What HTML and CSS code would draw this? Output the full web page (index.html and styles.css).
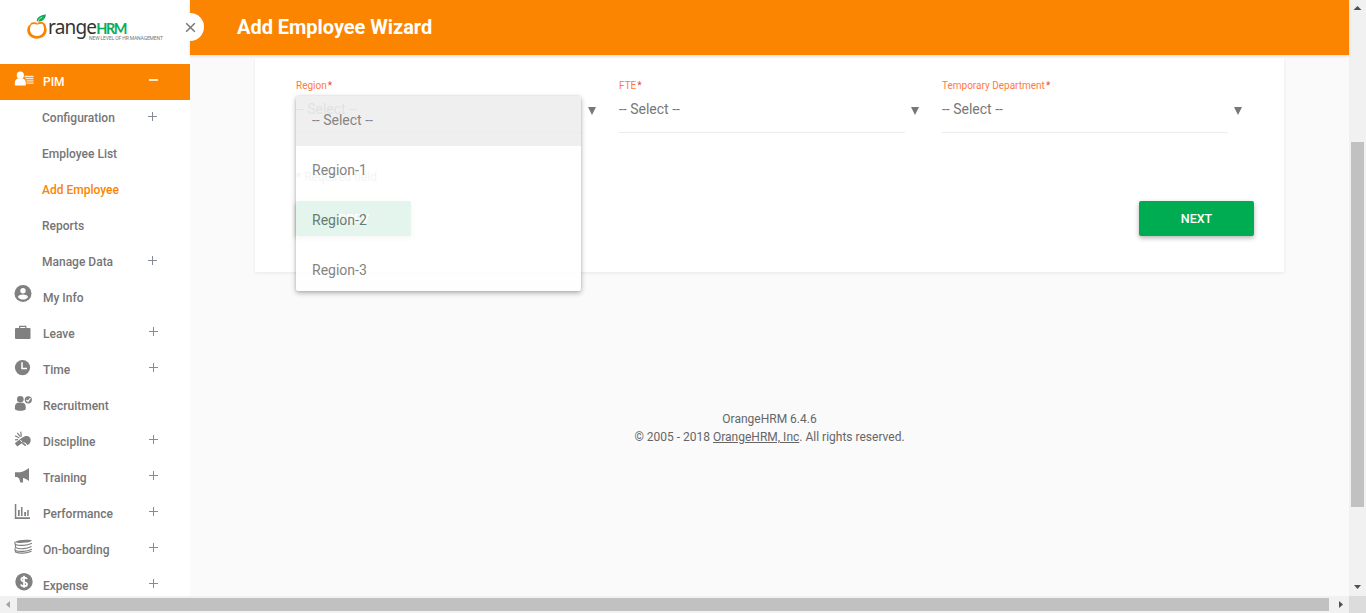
FILE: index.html
```html
<!DOCTYPE html>
<html lang="en">
<head>
<meta charset="utf-8">
<title>Add Employee Wizard</title>
<link rel="stylesheet" href="styles.css">
</head>
<body>
<div class="app">
  <div class="content">
    <aside class="sidebar">
      <div class="brand">
        <svg class="fruit" width="22" height="28" viewBox="0 0 22 28">
          <path d="M5 10.200C2 11.600.2 14 .2 17c0 5 4.300 8.700 9.700 8.700s9.800-3.700 9.800-8.700c0-3.400-1.800-6.200-4.700-7.300 1.400 2 2 4.100 2 6.300 0 4.100-2.900 6.900-6.900 6.900S3 20.100 3 16.400c0-2.400.8-4.500 2.600-6.200z" fill="#f98602"/>
          <path d="M4 10.900c3.200-2.200 5.300.3 6.800-.3 1.600-.6 3.200-1.300 4.700-.6 1.800 1 2.700 3 2.700 5" fill="none" stroke="#f98602" stroke-width="1.800"/>
          <path d="M9.800 8.500C9.500 4.500 13 2.100 19 1.500c-.6 4.500-3.400 7.500-9.200 7z" fill="#0aac57"/>
          <path d="M10.400 10.500C10.500 7.500 12.500 5.500 15.300 4.200" stroke="#fff" stroke-width=".7" fill="none"/>
        </svg>
        <div class="wordmark"><span class="name">range<b>HRM</b></span><span class="tagline">NEW LEVEL OF HR MANAGEMENT</span></div>
      </div>
      <nav class="menu">
        <a class="row active"><span class="icon"><svg width="20" height="20" viewBox="0 0 20 20" fill="#fff"><circle cx="6.300" cy="6.200" r="3.600"/><path d="M1 16.500c-1-4.500 1-7.500 5.300-7.500s6.500 3 5.300 7.500z"/><path d="M10.500 6.700h9v1.500h-9zM11.500 9h8v1.300h-8zM12.500 11.200h7v1.300h-7zM12.500 13.400h7v1.300h-7z" opacity=".8"/></svg></span><span class="text">PIM</span><i class="toggle minus"></i></a>
        <a class="row sub"><span class="text">Configuration</span><i class="toggle plus"></i></a>
        <a class="row sub"><span class="text">Employee List</span></a>
        <a class="row sub current"><span class="text">Add Employee</span></a>
        <a class="row sub"><span class="text">Reports</span></a>
        <a class="row sub"><span class="text">Manage Data</span><i class="toggle plus"></i></a>
        <a class="row"><span class="icon"><svg width="20" height="20" viewBox="0 0 20 20"><circle cx="9" cy="8.500" r="8.500"/><circle cx="9" cy="5.700" r="2.700" fill="#fff"/><path d="M3.900 11.900c1.500-3.100 8.700-3.100 10.200 0-2.600 3.600-7.600 3.600-10.200 0z" fill="#fff"/></svg></span><span class="text">My Info</span></a>
        <a class="row"><span class="icon low"><svg width="20" height="20" viewBox="0 0 20 20"><rect x="1" y="5" width="15.500" height="11" rx="1"/><path d="M5.600 5V3.300h6.200V5" fill="none" stroke="#808080" stroke-width="1.200"/></svg></span><span class="text">Leave</span><i class="toggle plus"></i></a>
        <a class="row"><span class="icon low"><svg width="20" height="20" viewBox="0 0 20 20"><circle cx="8.500" cy="8.600" r="7.600"/><path d="M8 3.300v6.200h5" fill="none" stroke="#fff" stroke-width="1.500"/></svg></span><span class="text">Time</span><i class="toggle plus"></i></a>
        <a class="row"><span class="icon low"><svg width="20" height="20" viewBox="0 0 20 20"><circle cx="6.300" cy="4.300" r="3.300"/><path d="M1 14.500c-.5-4.200.7-6.700 3.600-6.700h3.500c2.900 0 4.100 2.500 3.600 6.700-2.300 1.800-8.400 1.800-10.700 0z"/><circle cx="14.300" cy="4.800" r="3.600"/><path d="m12.400 4.900 1.500 1.600L16.400 3" fill="none" stroke="#fff" stroke-width="1.200"/></svg></span><span class="text">Recruitment</span></a>
        <a class="row"><span class="icon low"><svg width="20" height="20" viewBox="0 0 20 20"><path d="M.8 12.300 7.600 7l3.200-1.800c2-.6 4.200-.1 5.200 1.600 1.500 2.500.5 6.500-2.700 7.200-.9-1.700-2.200-2.600-4-2.800L3.200 15.500z"/><path d="m8.500 12 3.300 2.600" stroke="#808080" stroke-width="1.600"/><path d="M1 4.800 5.200 7M3.300 1.900l3.200 3.900M6.700.7l.7 4.800M1 8.900l3-.3" fill="none" stroke="#808080" stroke-width="1.200"/><path d="m6.300 9 1.800 2" stroke="#fff"/></svg></span><span class="text">Discipline</span><i class="toggle plus"></i></a>
        <a class="row"><span class="icon low"><svg width="20" height="20" viewBox="0 0 20 20"><path d="M1 5.300h5C9 4.500 12 3.500 15 1v13c-2.300-1.900-4.400-2.700-6-3v4.500H6.300L5 11H3.700v-1H1z"/></svg></span><span class="text">Training</span><i class="toggle plus"></i></a>
        <a class="row"><span class="icon low"><svg width="20" height="20" viewBox="0 0 20 20"><path d="M.8 1h1.500v13.300H16V16H.8zM4 7h1.700v6H4zM7 4h1.500v9H7zM10.200 9H12v4h-1.800zM13.200 7h1.500v6h-1.500z"/></svg></span><span class="text">Performance</span><i class="toggle plus"></i></a>
        <a class="row"><span class="icon low"><svg width="20" height="20" viewBox="0 0 20 20"><path d="M1 3C4 .7 12 .2 18 1.200c-2 1.900-3.500 2.300-6 2.400C7.500 4.100 3 4.300 1 3z"/><g fill="none" stroke="#808080" stroke-width="1.200"><path d="M1 2.700v2.500c4.500 2.200 12 1.200 17-1M1.500 6v2.500c4.500 2.200 11.500 1.200 16-1M1 9.200v2c4.500 2.200 12 1.200 17-1M1.500 12v1c4.500 2 11.500 1.200 16-.8"/></g></svg></span><span class="text">On-boarding</span><i class="toggle plus"></i></a>
        <a class="row"><span class="icon"><svg width="20" height="20" viewBox="0 0 20 20"><circle cx="10" cy="8.700" r="8.700"/><path d="M13 6c-.7-2-5.700-2-5.700.5s5.700 2 5.700 4.700-5.500 2.600-6.200.4M10 2.700v12" fill="none" stroke="#fff" stroke-width="1.800"/></svg></span><span class="text">Expense</span><i class="toggle plus"></i></a>
      </nav>
    </aside>
    <main class="main">
      <header class="topbar"><h1>Add Employee Wizard</h1><button class="collapse" aria-label="Close menu"><svg width="11" height="11" viewBox="0 0 11 11"><path d="m1.200 1.200 8.600 8.600m0-8.600L1.200 9.800" stroke="#777" stroke-width="1.500"/></svg></button></header>
      <section class="card">
        <div class="fields">
          <div class="field">
            <label>Region<em>*</em></label><div class="select"><span>-- Select --</span><i class="caret"></i></div>
            <ul class="options"><li class="chosen">-- Select --</li><li>Region-1</li><li>Region-2</li><li>Region-3</li></ul>
          </div>
          <div class="field"><label>FTE<em>*</em></label><div class="select"><span>-- Select --</span><i class="caret"></i></div></div>
          <div class="field"><label>Temporary Department<em>*</em></label><div class="select"><span>-- Select --</span><i class="caret"></i></div></div>
        </div>
        <p class="required"><em>*</em> Required field</p>
        <div class="actions"><button class="btn">PREV</button><button class="btn">NEXT</button></div>
      </section>
      <footer class="footer">OrangeHRM 6.4.6<br>© 2005 - 2018 <a>OrangeHRM, Inc</a>. All rights reserved.</footer>
    </main>
    <div class="vscroll"><svg width="17" height="17"><path d="m8.500 6 4 4h-8z" fill="#505050"/></svg><div class="vthumb"></div><svg width="17" height="17"><path d="M5 6h7L8.500 10z" fill="#505050"/></svg></div>
  </div>
  <div class="hscroll"><svg width="17" height="17"><path d="M10 5v7L6 8.500z" fill="#a3a3a3"/></svg><div class="hthumb"></div><svg width="20" height="17"><path d="M10 5v7l4-3.500z" fill="#505050"/></svg><div class="corner"></div></div>
</div>
</body>
</html>
```
FILE: styles.css
```css
* { box-sizing: border-box; }
body { margin: 0; font-family: Roboto, "Liberation Sans", sans-serif; color: #757575; background: #fafafa; overflow: hidden; }
h1, p, ul { margin: 0; padding: 0; }
em { font-style: normal; }
.app { height: 613px; display: flex; flex-direction: column; }
.content { height: 596px; display: flex; overflow: hidden; }

.sidebar { width: 190px; flex: none; background: #fff; height: 596px; overflow: hidden; }
.brand { height: 64px; padding: 13px 0 0 27px; display: flex; }
.fruit { flex: none; }
.wordmark { display: flex; flex-direction: column; margin-left: -1px; white-space: nowrap; }
.name { font-family: "Noto Sans", "Open Sans", sans-serif; font-size: 19px; line-height: 29px; height: 22px; letter-spacing: -.8px; color: #333; }
.name b { font-family: Lato, sans-serif; font-size: 14.5px; letter-spacing: -1.5px; color: #0aac57; font-weight: 700; }
.tagline { font-size: 5px; line-height: 6px; color: #777; margin-left: 41px; letter-spacing: -.14px; }
.row { height: 36px; display: flex; padding-left: 14px; font-size: 12px; line-height: 36px; font-weight: 500; color: #757575; }
.icon { width: 29px; flex: none; padding-top: 5px; line-height: 0; }
.low { padding-top: 7px; }
.icon svg { fill: #808080; }
.text { width: 106px; white-space: nowrap; }
.sub { padding-left: 42px; }
.active { background: #fb8500; color: #fff; }
.active .icon svg { fill: #fff; }
.current { color: #fb8500; }
.toggle { width: 9px; height: 9px; margin: 11px 0 0 0; background: linear-gradient(#858b92, #858b92) center / 9px 1px no-repeat, linear-gradient(#858b92, #858b92) center / 1px 9px no-repeat; }
.sub .toggle { margin-top: 12px; }
.active .minus { background: linear-gradient(#ffe9cf, #ffe9cf) left center / 9px 2px no-repeat; }

.main { width: 1159px; background: #fafafa; }
.topbar { height: 55px; background: #fb8500; padding-left: 47px; position: relative; box-shadow: 0 1px 3px rgba(0,0,0,.14); }
h1 { color: #fff; font-size: 20px; line-height: 54px; font-weight: 700; letter-spacing: -.03px; }
.collapse { position: absolute; left: -14px; top: 13px; width: 28px; height: 28px; border: 0; border-radius: 50%; background: #fff; padding: 0; display: flex; align-items: center; justify-content: center; }
.card { margin: 3px 0 0 65px; width: 1029px; height: 214px; background: #fff; padding: 21px 30px 0 41px; box-shadow: 0 1px 3px rgba(0,0,0,.08); }
.fields { display: flex; }
.field { width: 323px; flex: none; position: relative; }
.field:last-child { width: 310px; }
.field label { display: block; height: 14px; font-size: 10px; line-height: 14px; color: #ff7a3d; }
.field em { color: #f44336; padding-left: 1px; }
.select { height: 40px; display: flex; font-size: 14px; line-height: 33px; color: #777; }
.select span { width: 286px; border-bottom: 1px solid #ececec; }
.caret { width: 8px; height: 8px; margin: 14px 0 0 6px; background: #777; clip-path: polygon(0 0, 100% 0, 50% 100%); }
.options { position: absolute; left: 0; top: 17px; width: 285px; height: 195px; overflow: hidden; background: #fff; opacity: .89; list-style: none; font-size: 14px; line-height: 49px; border-radius: 2px; box-shadow: 0 2px 5px rgba(0,0,0,.34), 0 0 2px rgba(0,0,0,.15); }
.options li { height: 50px; padding-left: 16px; color: #757575; }
.options .chosen { background: #eee; }
.required { height: 68px; padding-top: 36px; font-size: 12px; line-height: 16px; color: #999; }
.required em { color: #999; }
.actions { display: flex; justify-content: space-between; }
.btn { width: 115px; height: 35px; border: 0; padding: 0; border-radius: 2px; background: #00ac52; color: #fff; font: 500 12.5px/35px Roboto, sans-serif; box-shadow: 0 2px 5px rgba(0,0,0,.3); }
.footer { margin-top: 138px; text-align: center; font-size: 12px; line-height: 18px; color: #666; }
.footer a { text-decoration: underline; }

.vscroll { width: 17px; background: #f1f1f1; display: flex; flex-direction: column; justify-content: space-between; }
.vthumb { width: 13px; height: 365px; background: #c1c1c1; margin: 125px 2px auto; flex: none; }
.vscroll svg { flex: none; display: block; }
.hscroll { height: 17px; background: #f1f1f1; display: flex; }
.hscroll svg { flex: none; display: block; }
.hthumb { width: 1312px; height: 13px; margin-top: 2px; background: #c1c1c1; flex: none; }
.corner { width: 17px; background: #dcdcdc; }
```
